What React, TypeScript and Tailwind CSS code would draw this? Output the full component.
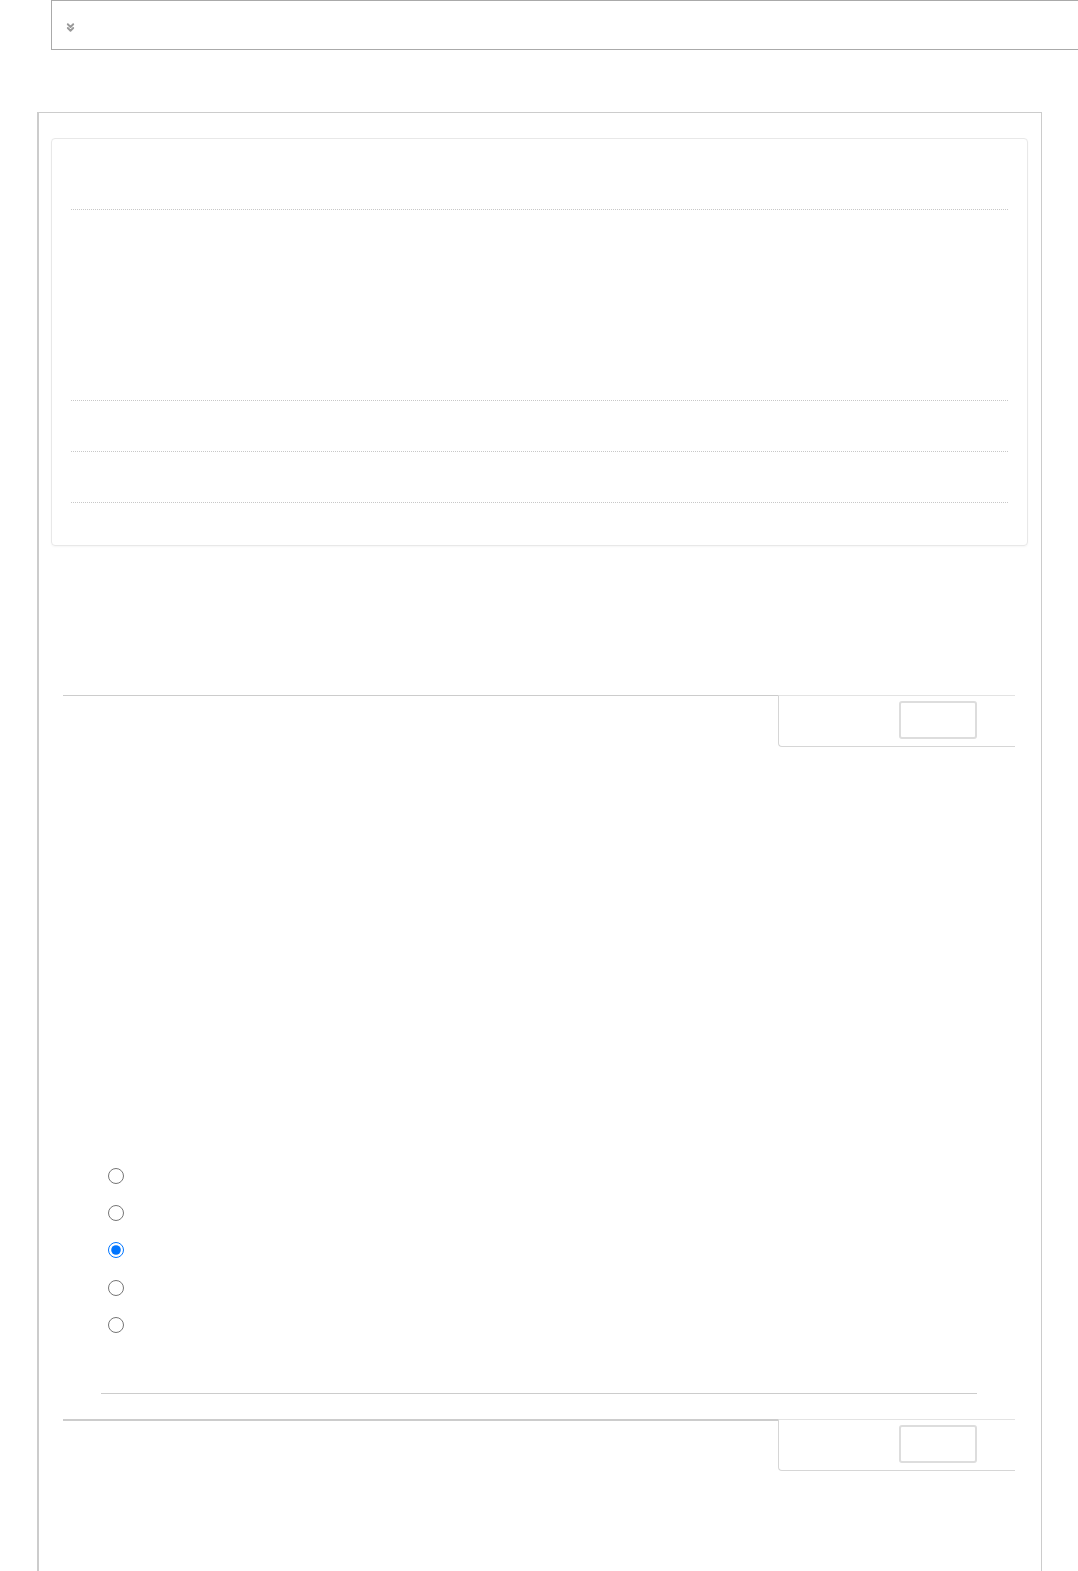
import { ChevronsDown } from 'lucide-react'

const options = [1, 2, 3, 4, 5]

function SectionHeader({ thick }: { thick?: boolean }) {
  return (
    <div className="flex items-start">
      <div className={`flex-1 ${thick ? 'border-t-2' : 'border-t'} border-[#cccccc]`} />
      <div className="w-[237px] h-[52px] border-t border-[#e3e3e3] border-l border-b border-l-[#d6d6d6] border-b-[#d6d6d6] rounded-bl-[4px] flex justify-end pt-[5px] pr-[38px]">
        <button className="w-[78px] h-[38px] border-2 border-[#dddddd] rounded-[3px] bg-white" />
      </div>
    </div>
  )
}

export default function App() {
  return (
    <div className="w-full min-h-screen bg-white overflow-x-hidden font-['Liberation_Sans',Arial,sans-serif]">
      {/* top toolbar */}
      <div className="ml-[51px] mr-[-30px] h-[50px] border border-[#aaaaaa] flex items-center pl-[12px]">
        <ChevronsDown size={13} strokeWidth={3.5} className="text-[#999999] mt-[5px]" />
      </div>

      {/* main panel */}
      <div className="mt-[62px] ml-[37px] w-[1005px] border border-l-2 border-[#cccccc] pb-[200px]">
        <div className="ml-[12px] mr-[13px] mt-[25px] h-[408px] border border-[#e8e8e8] rounded-[4px] shadow-[0_1px_2px_rgba(0,0,0,0.04)] px-[19px]">
          <div className="h-[70px]" />
          <div className="border-t border-dotted border-[#c8c8c8]" />
          <div className="h-[190px]" />
          <div className="border-t border-dotted border-[#c8c8c8]" />
          <div className="h-[50px]" />
          <div className="border-t border-dotted border-[#c8c8c8]" />
          <div className="h-[50px]" />
          <div className="border-t border-dotted border-[#c8c8c8]" />
        </div>

        <div className="pl-6 pr-[26px] mt-[149px]">
          <SectionHeader />

          <div className="px-[38px] pt-[410px]">
            <div className="flex flex-col pl-[7px]">
              {options.map((o) => (
                <label key={o} className="h-[37.3px] flex items-center">
                  <input
                    type="radio"
                    name="choice"
                    defaultChecked={o === 3}
                    className="w-4 h-4 m-0"
                  />
                </label>
              ))}
            </div>
            <div className="mt-[50px] border-t border-[#cccccc]" />
          </div>

          <div className="mt-[25px]">
            <SectionHeader thick />
          </div>
        </div>
      </div>
    </div>
  )
}
